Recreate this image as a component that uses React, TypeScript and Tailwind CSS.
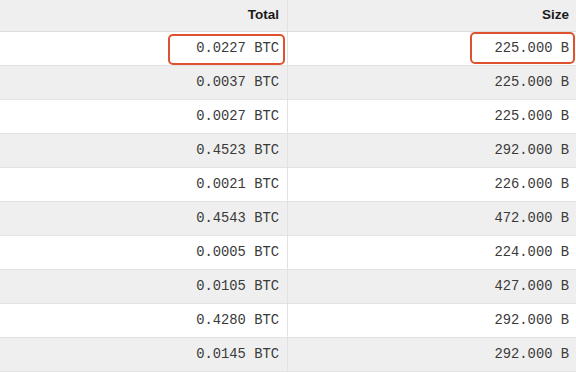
import React from "react";

const rows = [
  ["0.0227 BTC", "225.000 B"],
  ["0.0037 BTC", "225.000 B"],
  ["0.0027 BTC", "225.000 B"],
  ["0.4523 BTC", "292.000 B"],
  ["0.0021 BTC", "226.000 B"],
  ["0.4543 BTC", "472.000 B"],
  ["0.0005 BTC", "224.000 B"],
  ["0.0105 BTC", "427.000 B"],
  ["0.4280 BTC", "292.000 B"],
  ["0.0145 BTC", "292.000 B"],
];

export default function App() {
  return (
    <div className="w-[576px] h-[373px] overflow-hidden bg-white">
      <div className="flex h-[32px] bg-[#efefef] border-b border-[#dcdcdc] font-['Liberation_Sans',Arial,sans-serif] font-bold text-[13.5px] text-[#1a1a1a]">
        <div className="w-[288px] border-r border-[#e2e2e2] flex items-center justify-end pr-[8px]">Total</div>
        <div className="flex-1 flex items-center justify-end pr-[7px]">Size</div>
      </div>
      {rows.map((r, i) => (
        <div
          key={i}
          className={`flex h-[34px] border-b border-[#e2e2e2] font-['Liberation_Mono','Courier_New',monospace] text-[13.8px] text-[#3a3a3a] ${
            i % 2 === 0 ? "bg-white" : "bg-[#efefef]"
          }`}
        >
          <div className="relative w-[288px] border-r border-[#e2e2e2] flex items-center justify-end pr-[8px] pt-[1px]">
            {r[0]}
            {i === 0 && (
              <div className="absolute left-[168px] top-[2px] w-[117px] h-[31px] border-[2.5px] border-[#e0522f] rounded-[5px]" />
            )}
          </div>
          <div className="relative flex-1 flex items-center justify-end pr-[7px] pt-[1px]">
            {r[1]}
            {i === 0 && (
              <div className="absolute left-[182px] top-[0px] w-[105px] h-[32px] border-[2.5px] border-[#e0522f] rounded-[5px]" />
            )}
          </div>
        </div>
      ))}
    </div>
  );
}
